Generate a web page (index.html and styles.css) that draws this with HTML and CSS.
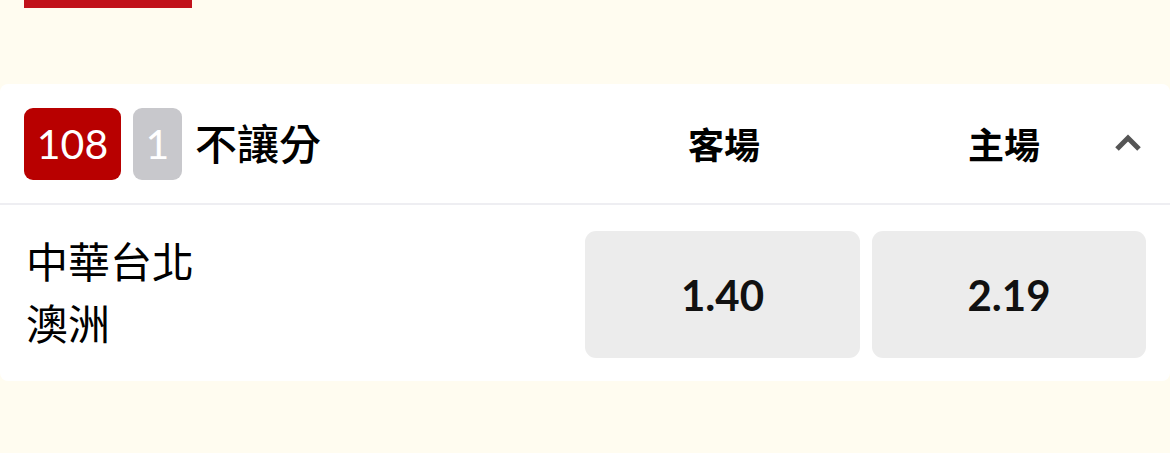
FILE: index.html
```html
<!DOCTYPE html>
<html lang="zh-Hant">
<head>
<meta charset="utf-8">
<link rel="stylesheet" href="styles.css">
</head>
<body>
<div class="top-bar"></div>
<section class="card">
  <header class="card-head">
    <div class="title">
      <span class="badge badge-red">108</span>
      <span class="badge badge-gray">1</span>
      <span class="title-text">不讓分</span>
    </div>
    <div class="col-label">客場</div>
    <div class="col-label">主場</div>
    <svg class="chevron" width="28" height="18" viewBox="0 0 28 18"><path d="M3 15 L14 4 L25 15" fill="none" stroke="#555" stroke-width="5"/></svg>
  </header>
  <div class="row">
    <div class="teams">
      <div>中華台北</div>
      <div>澳洲</div>
    </div>
    <div class="odds">
      <button class="odd">1.40</button>
      <button class="odd">2.19</button>
    </div>
  </div>
</section>
</body>
</html>
```

FILE: styles.css
```css
html, body {
  margin: 0;
  padding: 0;
  background: #fffcf0;
  width: 1170px;
  height: 453px;
  overflow: hidden;
  font-family: Lato, "Noto Sans CJK TC", sans-serif;
  color: #000;
}
.top-bar {
  width: 168px;
  height: 8px;
  margin-left: 24px;
  background: #c1121b;
}
.card {
  margin-top: 76px;
  background: #fff;
  border-radius: 8px;
  height: 297px;
}
.card-head {
  display: flex;
  align-items: center;
  height: 119px;
  border-bottom: 2px solid #eeeef2;
  padding-left: 24px;
  padding-right: 28px;
}
.title {
  flex: 1;
  display: flex;
  align-items: center;
}
.badge {
  height: 72px;
  border-radius: 9px;
  color: #fff;
  font-family: Lato, sans-serif;
  font-size: 41px;
  display: flex;
  align-items: center;
  justify-content: center;
}
.badge-red {
  width: 97px;
  background: #b80000;
}
.badge-gray {
  width: 49px;
  background: #c8c8cc;
  margin-left: 12px;
}
.title-text {
  margin-left: 13px;
  margin-top: -4px;
  font-family: "Noto Sans CJK TC", sans-serif;
  font-size: 42px;
  font-weight: 500;
}
.col-label {
  width: 140px;
  text-align: center;
  font-family: "Noto Sans CJK TC", sans-serif;
  font-size: 36px;
  font-weight: 700;
  margin-top: -2px;
}
.col-label + .col-label {
  margin-left: 140px;
}
.chevron {
  margin-left: 40px;
  margin-top: -2px;
}
.row {
  display: flex;
  align-items: center;
  height: 176px;
  padding-left: 26px;
  padding-right: 24px;
}
.teams {
  flex: 1;
  font-family: "Noto Sans CJK TC", sans-serif;
  font-size: 42px;
  font-weight: 400;
  line-height: 62px;
  margin-top: -5px;
}
.odds {
  display: flex;
  gap: 12px;
  margin-top: 3px;
}
.odd {
  width: 275px;
  height: 127px;
  border: none;
  border-radius: 11px;
  background: #ececec;
  font-family: Lato, sans-serif;
  font-size: 42px;
  font-weight: 700;
  color: #111;
  padding: 0;
}
.odd + .odd {
  width: 274px;
}
```
